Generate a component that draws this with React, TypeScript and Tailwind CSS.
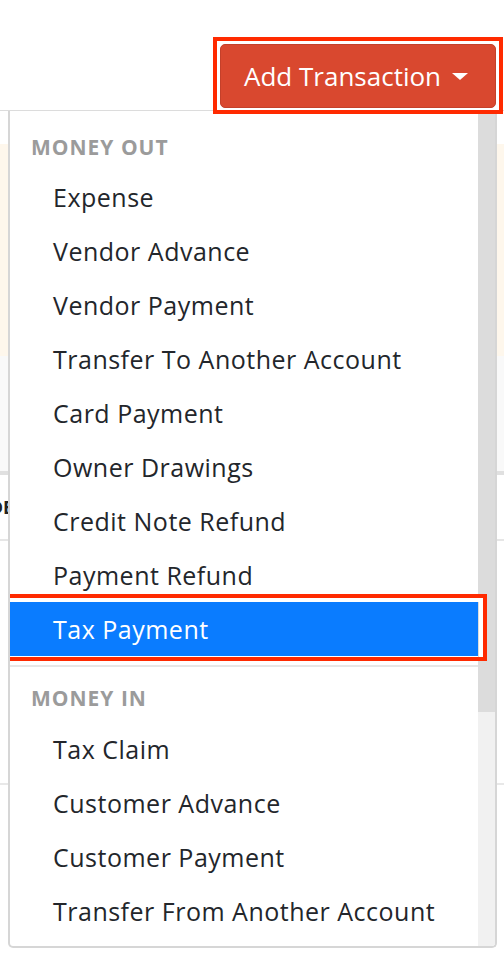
const moneyOut = [
  "Expense",
  "Vendor Advance",
  "Vendor Payment",
  "Transfer To Another Account",
  "Card Payment",
  "Owner Drawings",
  "Credit Note Refund",
  "Payment Refund",
];

const moneyIn = ["Tax Claim", "Customer Advance", "Customer Payment", "Transfer From Another Account"];

function MenuItem({ label, active }: { label: string; active?: boolean }) {
  return (
    <div
      className={
        "relative flex h-[54px] items-center pl-[43px] text-[25px] leading-none tracking-[0.5px] " +
        (active ? "bg-[#0a7cff] text-white" : "text-[#23262b]")
      }
    >
      {label}
      {active && (
        <div className="pointer-events-none absolute -top-[8px] -left-[8px] -right-[9px] -bottom-[5px] border-[4px] border-[#ff2a00] shadow-[inset_4px_4px_0_0_white,inset_-4px_0_0_0_white]" />
      )}
    </div>
  );
}

export default function App() {
  return (
    <div className="relative h-[958px] w-[504px] overflow-hidden bg-white font-['Open_Sans','Liberation_Sans',sans-serif]">
      {/* page behind the menu */}
      <div className="flex h-[111px] justify-end border-b border-[#dcdcdc] pt-[44px] pr-[8px]">
        <div className="relative z-20 h-[64px]">
          <button className="flex h-[64px] w-[276px] items-center rounded-[5px] border border-[#c4402a] bg-[#d9482f] pl-[23px] text-[26px] leading-none text-white">
            Add Transaction
            <span className="ml-[11px] h-0 w-0 border-x-[8px] border-t-[7px] border-x-transparent border-t-white" />
          </button>
          <div className="pointer-events-none absolute -top-[7px] -left-[7px] -right-[7px] -bottom-[6px] border-[4px] border-[#ff2a00]" />
        </div>
      </div>
      <div className="h-[33px]" />
      <div className="h-[212px] bg-[#fef7ec]" />
      <div className="h-[119px] border-b-[4px] border-[#e0e0e0] bg-[#f9f9f9]" />
      <div className="flex h-[66px] items-center border-b-[2px] border-[#e6e6e6]">
        <span className="-ml-[36px] text-[18px] font-bold text-[#222]">CODE</span>
      </div>
      <div className="h-[102px]" />
      <div className="h-[142px] border-b-[2px] border-[#e8e8e8]" />

      {/* dropdown */}
      <div className="absolute top-[111px] left-[8px] z-10 flex h-[837px] w-[489px] overflow-hidden rounded-b-[5px] border-[2px] border-t-0 border-[#d6d6d6] bg-white">
        <div className="flex flex-1 flex-col">
          <div className="h-[2px]" />
          <div className="pt-[22px] pb-[11px] pl-[21px] text-[21px] leading-[24px] font-bold tracking-[1px] text-[#9b9b9b]">
            MONEY OUT
          </div>
          {moneyOut.map((m) => (
            <MenuItem key={m} label={m} />
          ))}
          <MenuItem label="Tax Payment" active />
          <div className="mt-[9px] h-[2px] bg-[#e6e6e6]" />
          <div className="pt-[19px] pb-[12px] pl-[21px] text-[21px] leading-[24px] font-bold tracking-[1px] text-[#9b9b9b]">
            MONEY IN
          </div>
          {moneyIn.map((m) => (
            <MenuItem key={m} label={m} />
          ))}
        </div>
        <div className="flex w-[17px] flex-col bg-[#f1f1f1]">
          <div className="h-[601px] bg-[#dcdcdc]" />
        </div>
      </div>
    </div>
  );
}
